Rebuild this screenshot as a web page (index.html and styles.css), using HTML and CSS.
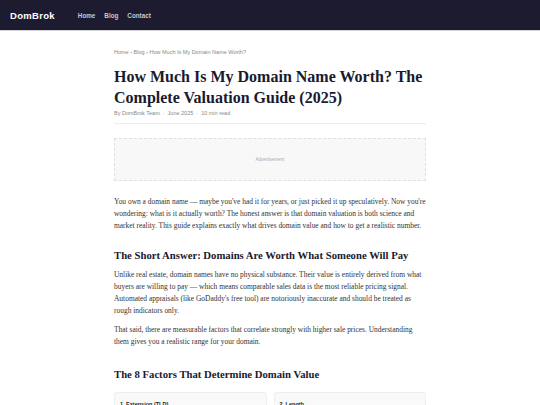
FILE: index.html
```html
<!DOCTYPE html>
<html lang="en">
<head>
<meta charset="utf-8">
<title>How Much Is My Domain Name Worth? The Complete Valuation Guide (2025)</title>
<link rel="stylesheet" href="styles.css">
</head>
<body>
<header class="site-header">
  <a class="logo" href="#">DomBrok</a>
  <nav class="nav">
    <a href="#">Home</a>
    <a href="#">Blog</a>
    <a href="#">Contact</a>
  </nav>
</header>
<main class="article">
  <div class="breadcrumb">Home › Blog › How Much Is My Domain Name Worth?</div>
  <h1 class="title">How Much Is My Domain Name Worth? The Complete Valuation Guide (2025)</h1>
  <div class="meta"><span>By DomBrok Team</span><span class="dot">·</span><span>June 2025</span><span class="dot">·</span><span>10 min read</span></div>
  <div class="ad">Advertisement</div>
  <p>You own a domain name — maybe you've had it for years, or just picked it up speculatively. Now you're wondering: what is it actually worth? The honest answer is that domain valuation is both science and market reality. This guide explains exactly what drives domain value and how to get a realistic number.</p>
  <h2>The Short Answer: Domains Are Worth What Someone Will Pay</h2>
  <p>Unlike real estate, domain names have no physical substance. Their value is entirely derived from what buyers are willing to pay — which means comparable sales data is the most reliable pricing signal. Automated appraisals (like GoDaddy's free tool) are notoriously inaccurate and should be treated as rough indicators only.</p>
  <p>That said, there are measurable factors that correlate strongly with higher sale prices. Understanding them gives you a realistic range for your domain.</p>
  <h2 class="h2-factors">The 8 Factors That Determine Domain Value</h2>
  <div class="factors">
    <div class="card"><h3>1. Extension (TLD)</h3></div>
    <div class="card"><h3>2. Length</h3></div>
  </div>
</main>
</body>
</html>
```

FILE: styles.css
```css
* { box-sizing: border-box; }
html, body { margin: 0; padding: 0; background: #fff; }
body { font-family: "Liberation Serif", "DejaVu Serif", serif; color: #333; }

.site-header {
  height: 31px;
  background: #1c1b2f;
  border-bottom: 1px solid #d4d4d8;
  display: flex;
  align-items: center;
  padding: 0 10px;
  gap: 23px;
}
.logo {
  font-family: "Liberation Sans", Arial, sans-serif;
  font-weight: 700;
  font-size: 9.5px;
  letter-spacing: 0.3px;
  color: #fff;
  text-decoration: none;
}
.nav { display: flex; gap: 9px; }
.nav a {
  font-family: "Liberation Sans", Arial, sans-serif;
  font-weight: 700;
  font-size: 6.3px;
  color: #c8c8d0;
  text-decoration: none;
}

.article {
  width: 312px;
  margin: 0 auto;
  padding-top: 17px;
}
.breadcrumb {
  font-family: "Liberation Sans", Arial, sans-serif;
  font-size: 5.5px;
  line-height: 8px;
  color: #888;
}
.title {
  font-family: "Liberation Serif", serif;
  font-weight: 700;
  font-size: 16px;
  line-height: 21px;
  color: #1a1a2e;
  margin: 10px 0 1px;
}
.meta {
  font-family: "Liberation Sans", Arial, sans-serif;
  font-size: 5.5px;
  line-height: 8px;
  color: #888;
  padding-bottom: 6px;
  border-bottom: 1px solid #ececec;
  display: flex;
  gap: 3px;
}
.ad {
  margin-top: 14px;
  height: 43px;
  background: #f8f8f8;
  border: 1px dashed #e0e0e0;
  display: flex;
  align-items: center;
  justify-content: center;
  font-family: "Liberation Sans", Arial, sans-serif;
  font-size: 4.5px;
  color: #aaa;
}
p {
  font-size: 7.45px;
  line-height: 12px;
  margin: 7px 0;
}
.ad + p { margin-top: 15px; }
h2 {
  font-family: "Liberation Serif", serif;
  font-weight: 700;
  font-size: 10.7px;
  line-height: 14px;
  color: #1a1a2e;
  margin: 16px 0 6px;
}
.h2-factors { margin-top: 19px; }
.factors {
  display: grid;
  grid-template-columns: 1fr 1fr;
  gap: 7px;
  margin-top: 11px;
}
.card {
  background: #f9f9f9;
  border: 1px solid #eeeeee;
  border-radius: 3px;
  padding: 8px 5px;
  height: 40px;
}
.card h3 {
  margin: 0;
  font-family: "Liberation Sans", Arial, sans-serif;
  font-weight: 700;
  font-size: 5.5px;
  color: #222;
}
```
